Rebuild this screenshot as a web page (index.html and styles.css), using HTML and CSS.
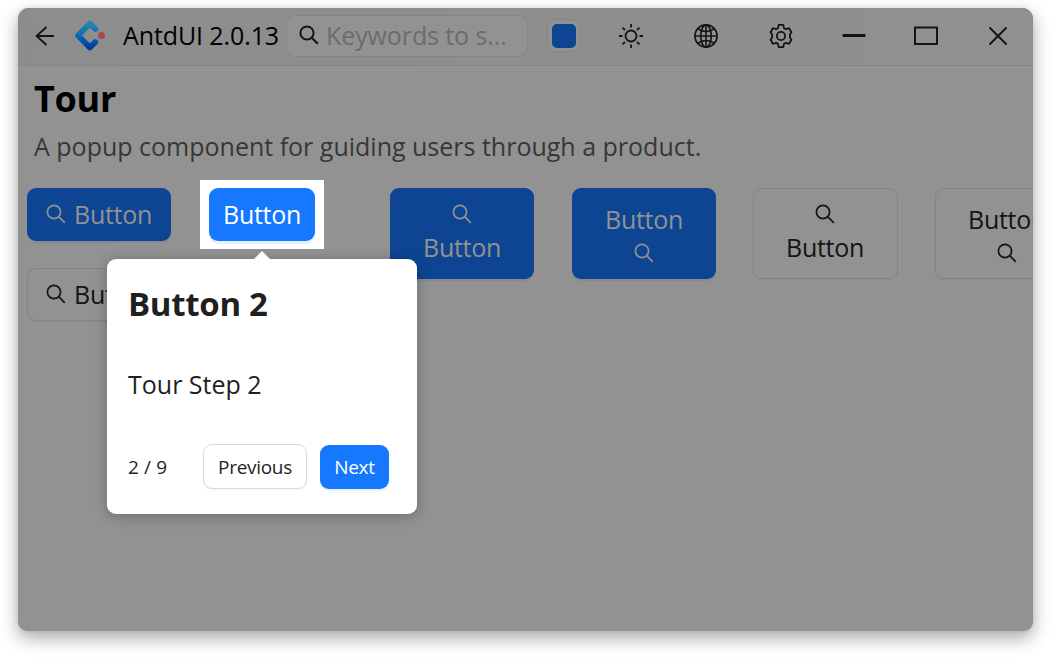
FILE: index.html
```html
<!DOCTYPE html>
<html lang="en">
<head>
<meta charset="utf-8">
<title>AntdUI</title>
<link rel="stylesheet" href="styles.css">
</head>
<body>
<svg width="0" height="0" class="defs">
  <defs>
    <symbol id="search" viewBox="0 0 20 20"><circle cx="8" cy="8" r="6.6"/><path d="M12.700 12.700 18.800 18.800"/></symbol>
    <linearGradient id="logo-a" x1="0" y1="0" x2="0" y2="1"><stop offset="0" stop-color="#2b86a5"/><stop offset=".45" stop-color="#0872b4"/><stop offset="1" stop-color="#0039a0"/></linearGradient>
  </defs>
</svg>
<main class="window">
  <header class="titlebar">
    <svg class="back" viewBox="0 0 20 20"><path d="M19 10H1.5M11.500 1 1.5 10 11.500 19"/></svg>
    <svg class="logo" viewBox="0 0 32 32"><path d="M21.300 8.900 15.800 3.600 4 15.500 15.800 27.400 21.300 22.100" fill="none" stroke="url(#logo-a)" stroke-width="5.800" stroke-linecap="round" stroke-linejoin="round"/><circle cx="27.500" cy="15.500" r="3.500" fill="#a34a53" stroke="none"/></svg>
    <span class="app-name">AntdUI 2.0.13</span>
    <div class="search"><svg class="icon"><use href="#search"/></svg><span class="placeholder">Keywords to s...</span></div>
    <div class="swatch"><i class="swatch-color"></i></div>
    <svg class="tool sun" viewBox="0 0 24 24"><circle cx="12" cy="12" r="5.5"/><path d="M12 0v3.5M12 20.5V24M0 12h3.5M20.5 12H24M3.6 3.6 6 6M18 18l2.4 2.4M20.4 3.6 18 6M6 18l-2.4 2.4"/></svg>
    <svg class="tool globe" viewBox="0 0 24 24"><circle cx="12" cy="12" r="11.1"/><ellipse cx="12" cy="12" rx="5.2" ry="11.1"/><path d="M12 1v22M1 12h22M4 4.5C8.200 8.600 15.800 8.600 20 4.500M4 19.500c4.200-4.100 11.800-4.100 16 0"/></svg>
    <svg class="tool gear" viewBox="0 0 24 24"><circle cx="12" cy="12" r="4.100"/><path d="M9.700.9h4.600l.7 3.200 1.900 1.100 3.200-1 2.300 4-1.500 2.300v3l1.500 2.300-2.300 4-3.200-1-1.900 1.100-.7 3.200H9.700L9 19.900l-1.900-1.100-3.200 1-2.300-4L3.100 13.500v-3L1.600 8.200l2.300-4 3.200 1L9 4.100z"/></svg>
    <svg class="tool min" viewBox="0 0 24 24"><path d="M.5 11.500h23"/></svg>
    <svg class="tool max" viewBox="0 0 24 24"><rect x="1" y="3.500" width="22" height="16.500"/></svg>
    <svg class="tool close" viewBox="0 0 24 24"><path d="m3.500 3.500 17 17M20.500 3.500l-17 17"/></svg>
  </header>
  <section class="intro">
    <h1 class="heading">Tour</h1>
    <p class="summary">A popup component for guiding users through a product.</p>
  </section>
  <section class="buttons">
    <div class="column">
      <div class="btn primary"><svg class="icon"><use href="#search"/></svg><span>Button</span></div>
      <div class="btn outline"><svg class="icon"><use href="#search"/></svg><span>Button</span></div>
    </div>
    <div class="spotlight">
      <div class="btn active"><span>Button</span></div>
      <div class="popover">
        <h2 class="step-title">Button 2</h2>
        <p class="step-text">Tour Step 2</p>
        <footer class="step-footer">
          <span class="count">2 / 9</span>
          <span class="small-btn previous">Previous</span>
          <span class="small-btn next">Next</span>
        </footer>
      </div>
    </div>
    <div class="btn tall primary first-tall"><svg class="icon"><use href="#search"/></svg><span>Button</span></div>
    <div class="btn tall primary flip"><span>Button</span><svg class="icon"><use href="#search"/></svg></div>
    <div class="btn tall outline"><svg class="icon"><use href="#search"/></svg><span>Button</span></div>
    <div class="btn tall outline flip"><span>Button</span><svg class="icon"><use href="#search"/></svg></div>
  </section>
</main>
</body>
</html>
```
FILE: styles.css
```css
* { box-sizing: border-box; }
body { margin: 0; padding: 8px 21px 27px 18px; height: 658px; overflow: hidden; background: #fff; font-family: "Open Sans", "Noto Sans", sans-serif; color: #141414; }
.defs { display: block; height: 0; width: 0; }
svg { fill: none; stroke: currentColor; flex: none; }
h1, h2, p { margin: 0; white-space: nowrap; }
.window { width: 1015px; height: 623px; overflow: hidden; border-radius: 11px 11px 9px 9px; background: #929292; box-shadow: 0 7px 18px rgba(0,0,0,.34), 0 0 4px rgba(0,0,0,.08); }
.titlebar { display: flex; align-items: center; height: 58px; padding: 0 0 2px 17px; border-bottom: 1px solid #858585; background: linear-gradient(90deg, #8d8d8d, #8e8e8e 40%, #8d908e 68%, #909090); }
.back { width: 20px; height: 20px; stroke-width: 1.8; }
.logo { width: 32px; height: 32px; margin-left: 19px; }
.app-name { width: 163px; margin-left: 17px; padding-bottom: 1px; font-size: 25px; line-height: 34px; letter-spacing: -.1px; color: #000; white-space: nowrap; }
.search { display: flex; align-items: center; width: 242px; height: 42px; padding: 0 0 1px 12px; border: 1px solid #858585; border-radius: 9px; background: #929292; }
.icon { width: 20px; height: 20px; stroke-width: 1.7; }
.search .icon { stroke-width: 2; }
.placeholder { margin-left: 7px; font-size: 25px; line-height: 34px; letter-spacing: -.1px; color: #6c6c6c; white-space: nowrap; }
.swatch { display: grid; place-items: center; width: 33px; height: 33px; margin-left: 19px; border: 1px solid #858585; border-radius: 8px; background: #929292; }
.swatch-color { width: 24px; height: 24px; border-radius: 5px; background: #0d4592; }
.tool { width: 24px; height: 24px; stroke-width: 1.8; }
.sun { margin-left: 39px; }
.globe { margin-left: 51px; stroke-width: 1.6; }
.gear { margin-left: 51px; stroke-linejoin: round; }
.min { margin-left: 49px; stroke-width: 3; }
.max { margin-left: 48px; stroke-width: 2; }
.close { margin-left: 48px; stroke-width: 2; }
.intro { padding: 9px 0 0 16px; }
.heading { font-size: 36px; line-height: 48px; font-weight: 700; letter-spacing: -.3px; color: #000; }
.summary { margin-top: 6px; font-size: 25px; line-height: 34px; color: #373737; }
.buttons { display: flex; align-items: flex-start; gap: 38px; width: 1090px; padding: 25px 0 0 9px; }
.column { display: flex; flex-direction: column; gap: 27px; }
.btn { display: flex; flex: none; align-items: center; justify-content: center; gap: 8px; width: 144px; height: 53px; padding-bottom: 2px; border-radius: 9px; font-size: 25px; line-height: 34px; letter-spacing: -.3px; }
.primary { background: #0d4592; color: #929292; box-shadow: 0 2px 1px #858b94; }
.outline { border: 1px solid #838383; box-shadow: 0 1px 1px #8e8e8e; }
.spotlight { position: relative; width: 124px; height: 69px; margin: -8px -9px 0; padding: 8px 9px; background: #fff; }
.active { width: 106px; background: #1677ff; color: #fff; box-shadow: 0 3px 0 #e8f1ff; }
.tall { flex-direction: column; justify-content: flex-start; height: 91px; gap: 6px; padding: 16px 0 0; }
.first-tall { margin-left: 37px; }
.flip { gap: 7px; padding-top: 14px; }
.tall.outline { width: 145px; margin-left: -1px; padding: 15px 1px 0 0; }
.tall.outline.flip { padding-top: 13px; }
.popover { position: absolute; z-index: 2; left: -93px; top: 79px; width: 310px; height: 255px; padding: 21px; border-radius: 9px; background: #fff; color: #1f1f1f; letter-spacing: 0; box-shadow: 0 2px 14px rgba(0,0,0,.26); }
.popover::before { content: ""; position: absolute; left: 147px; top: -8px; width: 16px; height: 8px; background: #fff; clip-path: polygon(50% 0, 100% 100%, 0 100%); }
.step-title { font-size: 33px; line-height: 48px; font-weight: 700; letter-spacing: -.3px; }
.step-text { margin-top: 39px; font-size: 25px; line-height: 34px; }
.step-footer { display: flex; align-items: center; height: 45px; margin-top: 43px; font-size: 19px; line-height: 26px; }
.count { width: 75px; letter-spacing: .15px; }
.small-btn { display: grid; place-items: center; height: 45px; border-radius: 9px; letter-spacing: -.3px; }
.previous { width: 104px; border: 1px solid #d9d9d9; box-shadow: 0 2px 1px #fafafa; }
.next { width: 69px; height: 44px; margin-left: 13px; background: #1677ff; color: #fff; box-shadow: 0 2px 1px #e6f0ff; }
```
